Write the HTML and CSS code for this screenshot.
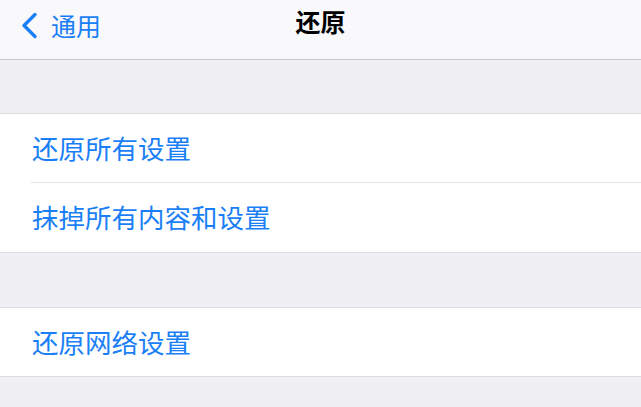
FILE: index.html
```html
<!DOCTYPE html>
<html lang="zh-CN">
<head>
<meta charset="utf-8">
<link rel="stylesheet" href="styles.css">
</head>
<body>
<div class="nav">
  <div class="back">
    <svg class="chev" width="18" height="27" viewBox="0 0 18 27"><path d="M15 2.5 L4 13.5 L15 24.5" fill="none" stroke="#1a7ff6" stroke-width="3.4" stroke-linecap="round" stroke-linejoin="round"/></svg>
    <span class="back-text">通用</span>
  </div>
  <div class="title">还原</div>
</div>
<div class="gap g1"></div>
<div class="group">
  <div class="row r1"><span class="label">还原所有设置</span></div>
  <div class="sep"></div>
  <div class="row r2"><span class="label">抹掉所有内容和设置</span></div>
</div>
<div class="gap g2"></div>
<div class="group">
  <div class="row r1"><span class="label">还原网络设置</span></div>
</div>
<div class="gap g3"></div>
</body>
</html>
```
FILE: styles.css
```css
html, body {
  margin: 0;
  padding: 0;
  background: #efeff4;
  font-family: "Noto Sans CJK SC", "Noto Sans", sans-serif;
  overflow: hidden;
}
.nav {
  position: relative;
  height: 59px;
  background: #f9f9fb;
  border-bottom: 1px solid #c8c8cc;
  display: flex;
  align-items: center;
}
.back {
  display: flex;
  align-items: center;
  padding-left: 20px;
  margin-top: -8px;
  color: #1a7ff6;
}
.chev {
  display: block;
}
.back-text {
  font-size: 25px;
  line-height: 30px;
  margin-left: 13px;
  margin-top: -2px;
}
.title {
  position: absolute;
  left: 0;
  right: 0;
  top: 5px;
  text-align: center;
  font-size: 25px;
  line-height: 32px;
  font-weight: 700;
  color: #000;
}
.gap { background: #efeff4; }
.g1 { height: 53px; }
.g2 { height: 54px; }
.g3 { height: 40px; }
.group {
  background: #fff;
  border-top: 1px solid #dcdcdf;
  border-bottom: 1px solid #dcdcdf;
}
.row {
  display: flex;
  align-items: center;
  padding-left: 32px;
}
.r1 { height: 68px; }
.r2 { height: 69px; }
.sep {
  height: 1px;
  margin-left: 31px;
  background: #e3e3e6;
}
.label {
  font-size: 26.5px;
  line-height: 32px;
  color: #1a7ff6;
  margin-top: -1px;
}
```
